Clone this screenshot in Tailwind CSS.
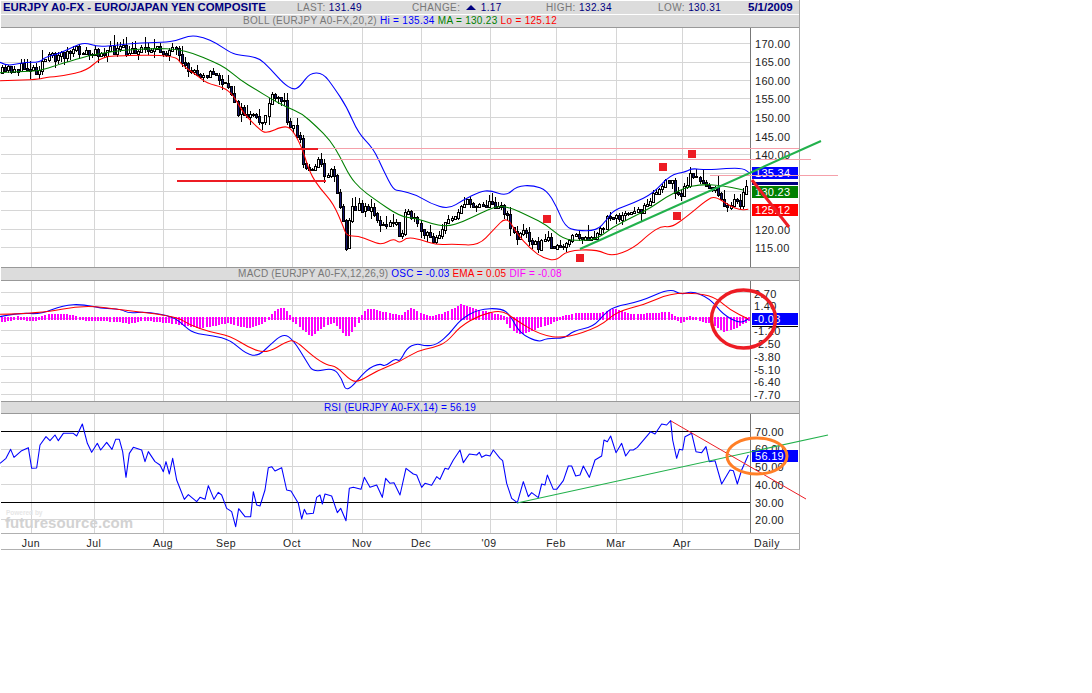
<!DOCTYPE html>
<html lang="en">
<head>
<meta charset="UTF-8">
<title>EURJPY chart</title>
<script src="https://cdn.jsdelivr.net/npm/@tailwindcss/browser@4"></script>
</head>
<body class="bg-white font-['Liberation_Sans',Arial,sans-serif]">
<div class="relative w-[1092px] h-[693px] overflow-hidden">
  <div class="w-[800px] pl-px pt-px flex flex-col border-r border-[#a8a8a8] h-[550px]">
    <!-- top quote bar -->
    <div class="h-[13px] shrink-0 bg-[#dcdcdc] flex items-center text-[10px] leading-none text-[#777] tracking-[0.4px]">
      <span class="w-[296px] pl-[2px] text-[11.4px] font-bold text-[#000080] tracking-normal whitespace-nowrap">EURJPY A0-FX - EURO/JAPAN YEN COMPOSITE</span>
      <span class="w-[115px] whitespace-nowrap">LAST: <span class="text-[#000080]">131.49</span></span>
      <span class="w-[134px] whitespace-nowrap">CHANGE: <span class="inline-block w-0 h-0 mx-[2px] border-x-[5px] border-x-transparent border-b-[5px] border-b-[#000080] align-[1px]"></span> <span class="text-[#000080]">1.17</span></span>
      <span class="w-[112px] whitespace-nowrap">HIGH: <span class="text-[#000080]">132.34</span></span>
      <span class="w-[90px] whitespace-nowrap">LOW: <span class="text-[#000080]">130.31</span></span>
      <span class="text-[11.5px] font-bold text-[#000080] tracking-normal whitespace-nowrap">5/1/2009</span>
    </div>
    <div class="h-px shrink-0 bg-white"></div>
    <div class="h-[13px] shrink-0 bg-[#dcdcdc] border-b border-[#999] flex items-center justify-center text-[10px] leading-none tracking-[0.3px] whitespace-nowrap">
      <span class="text-[#777]">BOLL (EURJPY A0-FX,20,2)&nbsp;</span><span class="text-[#0000ff]">Hi = 135.34&nbsp;</span><span class="text-[#008000]">MA = 130.23&nbsp;</span><span class="text-[#ff0000]">Lo = 125.12</span>
    </div>

    <!-- price panel -->
    <svg class="block w-[799px] h-[239px] shrink-0 overflow-visible" viewBox="1 28 799 239" font-size="11" letter-spacing=".3" fill="#222">
      <g stroke="#d6d6d6" shape-rendering="crispEdges" fill="none">
        <path d="M1 43.5H750M1 62.5H750M1 80.5H750M1 98.5H750M1 117.5H750M1 136.5H750M1 154.5H750M1 173.5H750M1 191.5H750M1 210.5H750M1 229.5H750M1 247.5H750"/>
        <path d="M31.5 28V267M94.5 28V267M163.5 28V267M226.5 28V267M292.5 28V267M362.5 28V267M421.5 28V267M490.5 28V267M556.5 28V267M616.5 28V267M682.5 28V267"/>
      </g>
      <path d="M750.5 28V267" stroke="#777" fill="none" shape-rendering="crispEdges"/>
      <g id="candles" shape-rendering="crispEdges"></g>
      <g transform="scale(.33333)" fill="none" stroke-width="3.2" stroke-linejoin="round">
        <polyline class="smooth" stroke="#0000ff" points="0,187 20,197 50,192 75,187 118,187 135,172 180,160 220,140 255,127 290,140 340,137 400,130 490,127 530,122 570,106 610,112 650,130 695,160 720,165 775,172 810,205 850,250 880,270 900,260 930,218 970,220 1000,260 1040,320 1075,400 1120,445 1150,510 1180,570 1200,572 1250,585 1290,610 1345,628 1390,600 1440,575 1470,571 1520,588 1550,558 1600,556 1640,570 1670,620 1695,680 1730,692 1790,692 1820,660 1840,630 1900,610 1960,580 2010,525 2060,515 2075,505 2120,510 2180,505 2230,505 2250,520"/>
        <polyline class="smooth" stroke="#008000" points="0,218 60,215 120,213 170,195 250,172 300,160 370,150 470,145 530,148 580,160 640,185 680,205 720,240 770,270 810,295 860,322 905,340 950,380 990,420 1020,470 1050,530 1080,565 1120,595 1200,650 1250,655 1290,670 1340,680 1390,665 1440,640 1490,618 1530,622 1590,650 1640,675 1690,718 1740,722 1790,718 1840,680 1900,650 1950,625 2000,590 2050,565 2100,553 2160,555 2230,570"/>
        <polyline class="smooth" stroke="#ff0000" points="0,242 60,240 120,238 135,232 190,228 260,212 300,175 340,167 525,165 545,195 590,225 620,250 670,262 700,285 730,340 780,390 800,400 850,378 875,385 905,440 930,520 960,565 1000,610 1030,680 1040,708 1075,708 1110,722 1145,735 1180,715 1200,730 1220,712 1260,718 1310,735 1360,732 1435,737 1480,690 1520,648 1550,700 1590,745 1630,775 1670,782 1700,752 1790,748 1835,770 1900,745 1950,700 1985,678 2015,682 2060,650 2120,600 2145,588 2190,618 2220,630 2245,628"/>
      </g>
      <text x="755" y="48">170.00</text><text x="755" y="66">165.00</text><text x="755" y="85">160.00</text><text x="755" y="103">155.00</text><text x="755" y="122">150.00</text><text x="755" y="141">145.00</text><text x="755" y="159">140.00</text>
      <text x="755" y="234">120.00</text><text x="755" y="252">115.00</text>
      <rect x="752" y="182" width="46" height="3" fill="#000080"/>
      <rect x="752" y="167" width="46" height="12" fill="#0000ff"/><text x="755" y="177" fill="#fff">135.34</text>
      <rect x="752" y="186" width="46" height="12" fill="#008000"/><text x="755" y="196" fill="#fff">130.23</text>
      <rect x="752" y="204" width="46" height="12" fill="#ff0000"/><text x="755" y="214" fill="#fff">125.12</text>
    </svg>

    <div class="h-[14px] shrink-0 bg-[#dcdcdc] border-y border-[#999] flex items-center justify-center text-[10px] leading-none tracking-[0.2px] whitespace-nowrap">
      <span class="text-[#777]">MACD (EURJPY A0-FX,12,26,9)&nbsp;</span><span class="text-[#0000ff]">OSC = -0.03&nbsp;</span><span class="text-[#ff0000]">EMA = 0.05&nbsp;</span><span class="text-[#ff00ff]">DIF = -0.08</span>
    </div>

    <!-- MACD panel -->
    <svg class="block w-[799px] h-[120px] shrink-0 overflow-visible" viewBox="1 281 799 120" font-size="11" letter-spacing=".3" fill="#222">
      <g stroke="#d6d6d6" shape-rendering="crispEdges" fill="none">
        <path d="M1 292.5H750M1 305.5H750M1 318.5H750M1 330.5H750M1 343.5H750M1 356.5H750M1 369.5H750M1 382.5H750M1 394.5H750"/>
        <path d="M31.5 281V401M94.5 281V401M163.5 281V401M226.5 281V401M292.5 281V401M362.5 281V401M421.5 281V401M490.5 281V401M556.5 281V401M616.5 281V401M682.5 281V401"/>
      </g>
      <path d="M750.5 281V401" stroke="#777" fill="none" shape-rendering="crispEdges"/>
      <g id="hist" fill="#ff00ff" shape-rendering="crispEdges"></g>
      <g transform="translate(0,265) scale(.33333)" fill="none" stroke-width="3.2" stroke-linejoin="round">
        <polyline class="smooth" stroke="#0000ff" points="0,155 60,143 120,148 190,120 250,118 300,130 365,133 385,145 440,140 520,155 550,180 580,205 640,212 690,225 740,268 775,273 810,240 850,205 880,225 920,290 940,322 1000,308 1025,340 1040,385 1100,312 1140,295 1155,305 1185,280 1200,290 1220,250 1250,235 1275,243 1310,240 1350,205 1380,165 1435,132 1505,130 1530,150 1560,205 1615,232 1640,220 1695,220 1720,197 1780,185 1810,150 1840,125 1920,110 2010,70 2045,90 2075,78 2130,100 2170,150 2220,175 2245,162"/>
        <polyline class="smooth" stroke="#ff0000" points="0,148 120,145 250,120 370,135 530,155 570,180 625,200 690,212 750,250 800,265 860,230 885,225 940,275 980,300 1010,305 1055,350 1080,348 1130,318 1200,290 1250,258 1300,248 1340,232 1380,185 1440,150 1505,135 1540,160 1620,210 1695,220 1800,185 1850,140 1930,120 2010,85 2100,85 2150,100 2190,135 2245,162"/>
      </g>
      <text x="754" y="298">2.70</text><text x="754" y="310">1.40</text><text x="754" y="335">-1.20</text><text x="754" y="348">-2.50</text><text x="754" y="361">-3.80</text><text x="754" y="374">-5.10</text><text x="754" y="386">-6.40</text><text x="754" y="399">-7.70</text>
      <rect x="752" y="313" width="46" height="12" fill="#0000ff"/><text x="754" y="323" fill="#fff">-0.03</text>
      <path d="M752 326.5H798" stroke="#000" shape-rendering="crispEdges"/>
    </svg>

    <div class="h-[13px] shrink-0 bg-[#dcdcdc] border-y border-[#999] flex items-center justify-center text-[10px] leading-none tracking-[0.2px] text-[#0000ff] whitespace-nowrap">RSI (EURJPY A0-FX,14) = 56.19</div>

    <!-- RSI panel -->
    <svg class="block w-[799px] h-[119px] shrink-0 overflow-visible" viewBox="1 414 799 119" font-size="11" letter-spacing=".3" fill="#222">
      <g stroke="#d6d6d6" shape-rendering="crispEdges" fill="none">
        <path d="M1 449.5H750M1 466.5H750M1 484.5H750M1 519.5H750"/>
        <path d="M31.5 414V533M94.5 414V533M163.5 414V533M226.5 414V533M292.5 414V533M362.5 414V533M421.5 414V533M490.5 414V533M556.5 414V533M616.5 414V533M682.5 414V533"/>
      </g>
      <path d="M1 431.5H750M1 502.5H750" stroke="#000" shape-rendering="crispEdges" fill="none"/>
      <path d="M750.5 414V533" stroke="#777" fill="none" shape-rendering="crispEdges"/>
      <text x="6" y="515" font-size="6.5" font-weight="700" fill="#e6e6e6" letter-spacing="0">Powered by</text>
      <text x="5" y="528" font-size="15" font-weight="700" fill="#d2d2d2" letter-spacing=".1">futuresource.com</text>
      <g transform="translate(0,400) scale(.33333)" fill="none" stroke-width="3.2" stroke-linejoin="round">
        <polyline stroke="#0000ff" points="0,190 18,175 32,148 42,172 65,152 85,143 95,205 110,204 120,135 138,110 150,122 165,105 175,122 190,100 220,100 230,108 247,72 262,130 275,157 292,130 302,150 320,127 336,148 347,118 358,118 368,155 378,232 388,160 400,142 425,150 435,185 445,155 465,185 480,195 490,215 498,185 508,222 518,175 530,240 553,298 565,284 590,305 600,292 615,298 625,257 642,298 655,277 665,285 680,325 695,335 707,380 716,326 735,350 752,350 760,275 770,315 780,318 795,270 805,203 815,200 825,213 845,203 860,270 873,273 895,310 905,357 913,328 920,342 940,340 950,292 960,285 967,312 975,282 995,288 1012,338 1022,325 1038,362 1048,265 1060,262 1083,268 1093,232 1110,262 1130,255 1147,292 1157,235 1170,250 1182,248 1200,285 1218,205 1240,222 1250,225 1265,262 1275,250 1295,256 1310,230 1320,238 1335,205 1345,208 1360,180 1380,150 1390,188 1408,162 1430,165 1438,157 1445,172 1458,165 1470,168 1480,150 1500,175 1508,182 1520,250 1535,295 1552,308 1570,245 1585,290 1595,278 1615,293 1625,252 1635,255 1642,225 1660,268 1670,268 1690,242 1705,198 1715,198 1727,228 1740,225 1750,198 1768,232 1785,180 1805,168 1812,120 1822,125 1832,108 1848,158 1865,130 1877,168 1890,150 1900,150 1912,142 1952,95 1965,102 1985,72 2000,75 2012,62 2018,120 2030,175 2038,148 2048,150 2055,110 2075,100 2088,155 2105,158 2118,140 2128,185 2145,182 2165,252 2190,210 2200,212 2212,252 2225,210 2245,165"/>
      </g>
      <text x="755" y="436">70.00</text><text x="755" y="453">60.00</text><text x="755" y="471">50.00</text><text x="755" y="489">40.00</text><text x="755" y="507">30.00</text><text x="755" y="524">20.00</text>
      <rect x="752" y="450" width="46" height="12" fill="#0000ff"/><text x="755" y="460" fill="#fff">56.19</text>
    </svg>

    <!-- month axis -->
    <svg class="block w-[799px] h-[15px] shrink-0 border-y border-[#b0b0b0] box-content" viewBox="1 534 799 15" font-size="10.5" letter-spacing=".5" fill="#222" text-anchor="middle">
      <text x="31" y="547">Jun</text><text x="94" y="547">Jul</text><text x="163" y="547">Aug</text><text x="226" y="547">Sep</text><text x="292" y="547">Oct</text><text x="362" y="547">Nov</text><text x="421" y="547">Dec</text><text x="489" y="547">'09</text><text x="556" y="547">Feb</text><text x="616" y="547">Mar</text><text x="682" y="547">Apr</text><text x="767" y="547">Daily</text>
    </svg>
  </div>

  <!-- hand-drawn annotations on top of the chart -->
  <svg class="absolute left-0 top-0 w-[1092px] h-[693px] pointer-events-none" viewBox="0 0 1092 693" fill="none">
    <path d="M318 148.5H799M331 159.5H811M710 175.5H838" stroke="#f5a0aa"/>
    <path d="M176 149H318M177 181H326" stroke="#ed1c24" stroke-width="2"/>
    <path d="M580 249L821 141" stroke="#22b14c" stroke-width="2"/>
    <path d="M752 180L789 227" stroke="#ed1c24" stroke-width="3"/>
    <g fill="#ed1c24"><rect x="543" y="215" width="8" height="8"/><rect x="576" y="254" width="8" height="8"/><rect x="659" y="163" width="8" height="8"/><rect x="688" y="150" width="8" height="8"/><rect x="673" y="212" width="8" height="8"/></g>
    <ellipse cx="743.5" cy="319" rx="32" ry="29" stroke="#ed1c24" stroke-width="3.5"/>
    <path d="M517 503L828 435" stroke="#22b14c" stroke-width="1.2"/>
    <path d="M671 421L806 499" stroke="#ed1c24"/>
    <ellipse cx="757" cy="456" rx="30" ry="18" stroke="#ff7f27" stroke-width="3"/>
  </svg>
</div>
<script>
// candle centre line and histogram shape, read off the chart in 3x px
const centre = [[3,215],[30,205],[95,200],[110,212],[125,185],[150,170],[200,158],[245,150],[270,165],[290,155],[370,145],[385,172],[395,150],[440,140],[470,150],[525,150],[545,195],[575,212],[630,220],[660,232],[680,265],[700,280],[712,330],[745,345],[770,360],[790,365],[810,295],[850,295],[860,350],[880,380],[900,420],[908,490],[925,510],[955,480],[975,520],[1000,510],[1010,570],[1025,640],[1040,740],[1050,620],[1095,620],[1115,630],[1150,680],[1190,660],[1200,710],[1215,650],[1230,640],[1265,700],[1300,715],[1340,670],[1385,610],[1440,610],[1500,610],[1530,670],[1550,710],[1575,690],[1610,740],[1640,715],[1670,745],[1700,740],[1710,700],[1750,715],[1770,725],[1810,680],[1825,640],[1880,650],[1920,630],[1950,590],[1990,555],[2020,545],[2030,590],[2050,570],[2075,515],[2100,550],[2125,550],[2160,590],[2175,610],[2210,605],[2220,625],[2230,575],[2245,560]];
const histo = [[0,-8],[50,2],[100,-5],[140,10],[200,8],[260,-3],[350,-5],[385,-12],[430,-2],[520,-12],[600,-25],[680,-10],[740,-25],[790,-10],[830,25],[850,28],[875,-3],[930,-50],[970,-20],[1000,-8],[1040,-55],[1075,-5],[1095,25],[1130,22],[1150,15],[1200,5],[1230,28],[1260,12],[1290,2],[1330,12],[1380,38],[1440,20],[1510,3],[1530,-28],[1560,-45],[1620,-22],[1670,-3],[1720,12],[1800,12],[1840,25],[1890,8],[2000,15],[2040,-8],[2070,3],[2130,-12],[2170,-35],[2210,-22],[2245,-3]];
function at(tbl, x) {
  for (let i = 1; i < tbl.length; i++) {
    if (x <= tbl[i][0]) {
      const a = tbl[i-1], b = tbl[i];
      return a[1] + (b[1]-a[1]) * (x-a[0]) / (b[0]-a[0]);
    }
  }
  return tbl[tbl.length-1][1];
}
let seed = 11;
function rnd() { seed = (seed * 16807) % 2147483647; return seed / 2147483647; }
let out = '';
let prev = at(centre, 3) / 3;
for (let x = 2; x < 749; x += 3.1) {
  const c = at(centre, x * 3) / 3;
  const open = prev, close = c + (rnd() - .5) * 9;
  const top = Math.min(open, close), bot = Math.max(open, close) + 1;
  const px = Math.round(x) + .5;
  const hi = top - rnd() * rnd() * 12, lo = bot + rnd() * rnd() * 10;
  const down = close > open;
  out += `<path d="M${px} ${hi.toFixed(0)}V${lo.toFixed(0)}" stroke="#000"/>`;
  out += `<rect x="${px-1}" y="${Math.round(top)+.5}" width="2" height="${Math.round(bot-top)}" fill="${down ? '#14146e' : '#fff'}" stroke="#000"/>`;
  prev = close;
}
document.getElementById('candles').innerHTML = out;
let bars = '';
for (let x = 1; x < 749; x += 3.1) {
  const h = at(histo, x * 3) / 3;
  const px = Math.round(x);
  const y0 = Math.round(317 - Math.max(h, 0)), y1 = Math.round(320 - Math.min(h, 0));
  bars += `<rect x="${px}" y="${y0}" width="2" height="${y1 - y0}"/>`;
}
document.getElementById('hist').innerHTML = bars;
// round off the band and MACD lines
document.querySelectorAll('polyline.smooth').forEach(function(pl) {
  const p = pl.getAttribute('points').split(' ').map(s => s.split(',').map(Number));
  let d = `M${p[0][0]} ${p[0][1]}`;
  for (let i = 1; i < p.length - 1; i++) {
    d += `Q${p[i][0]} ${p[i][1]} ${(p[i][0]+p[i+1][0])/2} ${(p[i][1]+p[i+1][1])/2}`;
  }
  d += `L${p[p.length-1][0]} ${p[p.length-1][1]}`;
  const path = document.createElementNS('http://www.w3.org/2000/svg', 'path');
  path.setAttribute('d', d);
  path.setAttribute('stroke', pl.getAttribute('stroke'));
  pl.replaceWith(path);
});
</script>
</body>
</html>
